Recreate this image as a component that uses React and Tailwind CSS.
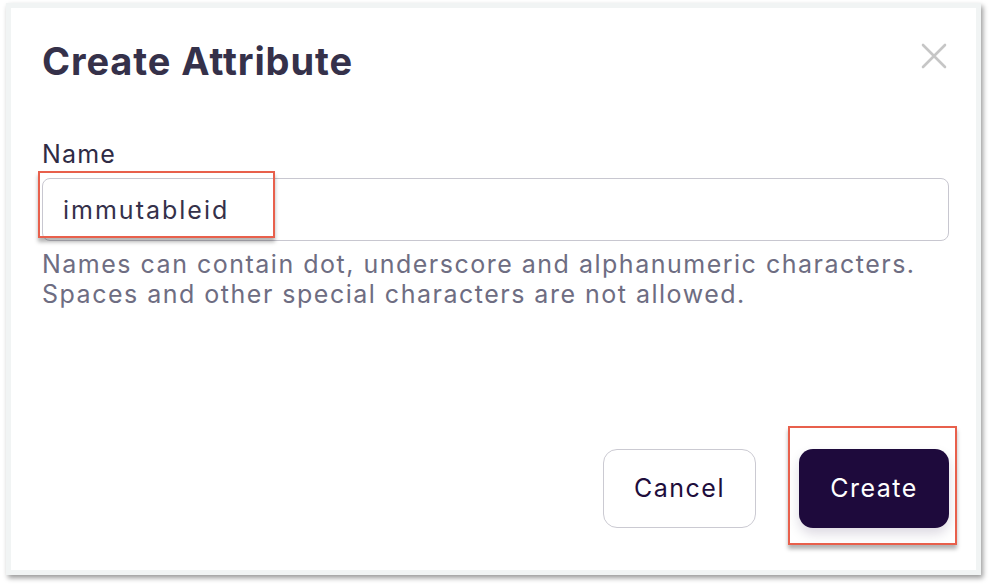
import React, { useState } from 'react';

function CloseIcon() {
  return (
    <svg width="26" height="26" viewBox="0 0 26 26" fill="none">
      <path d="M2 2 L24 24 M24 2 L2 24" stroke="#c6c6c6" strokeWidth="2.6" strokeLinecap="round" />
    </svg>
  );
}

export default function App() {
  const [name, setName] = useState('immutableid');

  return (
    <div className="min-h-screen w-full bg-white pl-[6px] pt-[3px] font-['Inter',sans-serif]">
      <div className="relative flex h-[572px] w-[975px] flex-col border-[5px] border-[#f1f4f4] bg-white pl-[31px] pr-[27px] pt-[31px] pb-[42px] shadow-[2px_3px_5px_rgba(0,0,0,0.4)]">
        {/* Header */}
        <div className="flex items-start justify-between">
          <h1 className="h-[44px] text-[38px] font-bold leading-[44px] tracking-[0.9px] text-[#35314a]">
            Create Attribute
          </h1>
          <button className="mr-[2px] mt-[4px]">
            <CloseIcon />
          </button>
        </div>

        {/* Name field */}
        <label className="mt-[55px] block h-[32px] text-[25px] leading-[32px] tracking-[1.2px] text-[#2f2b45]">Name</label>
        <div className="relative mt-[8px]">
          <input
            value={name}
            onChange={(e) => setName(e.target.value)}
            className="h-[63px] w-full rounded-[8px] border border-[#c8c7d0] bg-white pl-[20px] text-[25px] tracking-[2px] text-[#35314a] outline-none"
          />
          <div className="pointer-events-none absolute left-[-4px] top-[-7px] h-[67px] w-[237px] border-2 border-[#e8604c] shadow-[0_4px_4px_rgba(0,0,0,0.3)]"></div>
        </div>
        <p className="mt-[8px] text-[25px] leading-[30px] tracking-[1.5px] text-[#6e6d82]">
          Names can contain dot, underscore and alphanumeric characters.
          <br />
          Spaces and other special characters are not allowed.
        </p>

        {/* Actions */}
        <div className="mt-auto flex justify-end gap-[43px]">
          <button className="h-[79px] w-[153px] rounded-[14px] border border-[#cbcad2] bg-white text-[25px] tracking-[1.5px] text-[#1e0d3c]">
            Cancel
          </button>
          <div className="relative">
            <button className="h-[79px] w-[150px] rounded-[14px] bg-[#1e0a3c] text-[25px] tracking-[1.5px] text-white shadow-[0_6px_12px_rgba(30,10,60,0.15)]">
              Create
            </button>
            <div className="pointer-events-none absolute left-[-11px] top-[-23px] h-[119px] w-[169px] border-2 border-[#e8604c] shadow-[0_4px_4px_rgba(0,0,0,0.3)]"></div>
          </div>
        </div>
      </div>
    </div>
  );
}
